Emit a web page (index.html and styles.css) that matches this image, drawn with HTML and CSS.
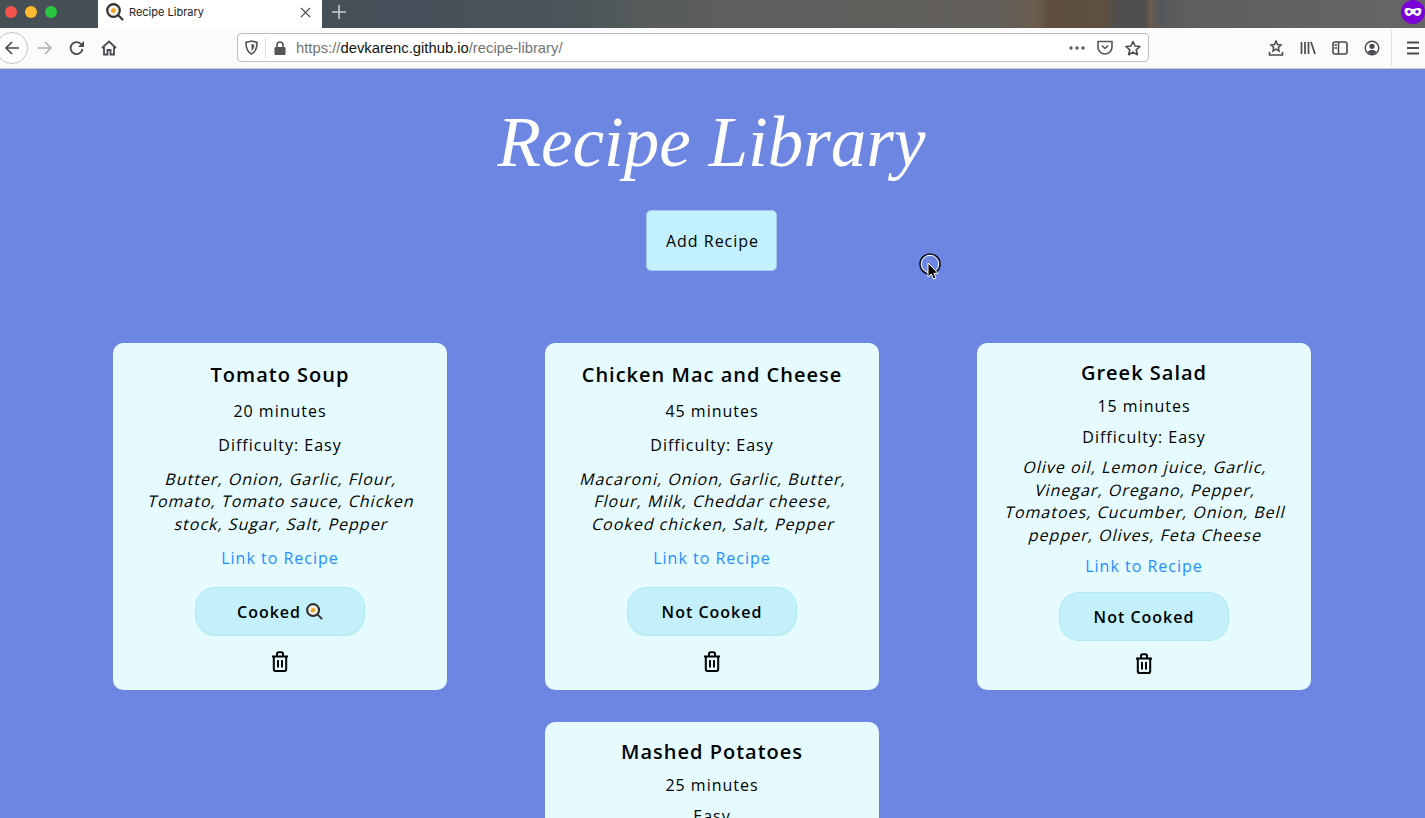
FILE: index.html
```html
<!DOCTYPE html>
<html lang="en">
<head>
<meta charset="utf-8">
<title>Recipe Library</title>
<link rel="stylesheet" href="styles.css">
</head>
<body>
<svg class="defs" width="0" height="0" aria-hidden="true">
  <defs>
    <symbol id="pan" viewBox="0 0 18 18">
      <path d="M11.5 11.5L16.5 16.5" stroke="#3a3a3a" stroke-width="2.2" stroke-linecap="round" fill="none"/>
      <circle cx="7.5" cy="7.5" r="6.3" fill="#f4efe6" stroke="#30302e" stroke-width="2.2"/>
      <circle cx="7.3" cy="7.6" r="2.3" fill="#f7a21b"/>
    </symbol>
    <symbol id="trash" viewBox="0 0 18 21">
      <path d="M1 5.5H17M6 5V2.8C6 1.9 6.6 1.2 7.5 1.2H10.5C11.4 1.2 12 1.9 12 2.8V5M2.8 5.5V18.2C2.8 19.2 3.6 20 4.6 20H13.4C14.4 20 15.2 19.2 15.2 18.2V5.5M7 9V16.5M11 9V16.5" fill="none" stroke="#000" stroke-width="2"/>
    </symbol>
  </defs>
</svg>

<div class="tabbar">
  <div class="lights">
    <span class="light light-red"></span>
    <span class="light light-yellow"></span>
    <span class="light light-green"></span>
  </div>
  <div class="tab">
    <svg class="tab-icon"><use href="#pan"/></svg>
    <span class="tab-title">Recipe Library</span>
    <svg class="tab-close" viewBox="0 0 12 12"><path d="M1 1L11 11M11 1L1 11" stroke="#444" stroke-width="1.4" fill="none"/></svg>
  </div>
  <svg class="new-tab" viewBox="0 0 14 14"><path d="M7 0V14M0 7H14" stroke="#c9cdcd" stroke-width="1.6" fill="none"/></svg>
  <svg class="mask" viewBox="0 0 24 24"><circle cx="12" cy="12" r="12" fill="#7b00d8"/><path d="M3.5 10C3.5 8.5 5 8 7 8C9 8 10.5 9 12 9C13.5 9 15 8 17 8C19 8 20.5 8.5 20.5 10C20.5 13 19 16 16.5 16C14 16 13.5 14 12 14C10.5 14 10 16 7.5 16C5 16 3.5 13 3.5 10Z" fill="#fff"/><circle cx="8" cy="11.8" r="1.7" fill="#7b00d8"/><circle cx="16" cy="11.8" r="1.7" fill="#7b00d8"/></svg>
</div>

<div class="toolbar">
  <span class="tool tool-back"><svg class="ico" viewBox="0 0 16 16"><path d="M15 8H2M8 2L2 8L8 14" fill="none" stroke="#4a4a4f" stroke-width="1.7"/></svg></span>
  <span class="tool tool-forward"><svg class="ico" viewBox="0 0 16 16"><path d="M1 8H14M8 2L14 8L8 14" fill="none" stroke="#b1b1b3" stroke-width="1.6"/></svg></span>
  <span class="tool"><svg class="ico" viewBox="0 0 16 16"><path d="M13.5 9A6 6 0 1 1 12 4L14 6" fill="none" stroke="#4a4a4f" stroke-width="1.8"/><path d="M15 1V7H9Z" fill="#4a4a4f"/></svg></span>
  <span class="tool"><svg class="ico" viewBox="0 0 16 16"><path d="M1 8L8 1.5L15 8M3 7V14.5H6.5V10H9.5V14.5H13V7" fill="none" stroke="#4a4a4f" stroke-width="1.8"/></svg></span>

  <div class="urlbar">
    <svg class="ico-small" viewBox="0 0 14 16"><path d="M7 1L13 2.5C13 9 11 13 7 15C3 13 1 9 1 2.5Z" fill="none" stroke="#55555a" stroke-width="1.7"/><path d="M7 4L10 5C10 8 9 10.5 7 12Z" fill="#55555a"/></svg>
    <span class="url-sep"></span>
    <svg class="ico-lock" viewBox="0 0 12 14"><path d="M3 6V4A3 3 0 0 1 9 4V6" fill="none" stroke="#55555a" stroke-width="1.6"/><rect x="0.5" y="6" width="11" height="8" rx="1.2" fill="#55555a"/></svg>
    <span class="url-text">https://<b class="url-host">devkarenc.github.io</b>/recipe-library/</span>
    <svg class="ico-dots" viewBox="0 0 16 4"><circle cx="2" cy="2" r="1.7" fill="#5a5a5f"/><circle cx="8" cy="2" r="1.7" fill="#5a5a5f"/><circle cx="14" cy="2" r="1.7" fill="#5a5a5f"/></svg>
    <svg class="ico-pocket" viewBox="0 0 16 15"><path d="M1 1.5H15V7A7 7 0 0 1 1 7Z" fill="none" stroke="#55555a" stroke-width="1.6" stroke-linejoin="round"/><path d="M4.8 5.5L8 8.5L11.2 5.5" fill="none" stroke="#55555a" stroke-width="1.6"/></svg>
    <svg class="ico-star" viewBox="0 0 16 16"><path d="M8 1.5L10 6L15 6.5L11.2 9.8L12.3 14.7L8 12.1L3.7 14.7L4.8 9.8L1 6.5L6 6Z" fill="none" stroke="#4a4a4f" stroke-width="1.6" stroke-linejoin="round"/></svg>
  </div>

  <div class="tools-right">
    <span class="tool"><svg class="ico" viewBox="0 0 16 16"><path d="M8 1L9.5 4.5L13 5L10.4 7.4L11 11L8 9.2L5 11L5.6 7.4L3 5L6.5 4.5Z" fill="none" stroke="#4a4a4f" stroke-width="1.5"/><path d="M1.5 12V15H14.5V12" fill="none" stroke="#4a4a4f" stroke-width="1.6"/></svg></span>
    <span class="tool"><svg class="ico" viewBox="0 0 16 16"><path d="M1.5 2V14M5 2V14M8.5 2V14M11 2L15 14" fill="none" stroke="#4a4a4f" stroke-width="1.7"/></svg></span>
    <span class="tool"><svg class="ico" viewBox="0 0 16 16"><rect x="1" y="2" width="14" height="12" rx="2" fill="none" stroke="#4a4a4f" stroke-width="1.6"/><path d="M6.5 2V14M2.5 5H5M2.5 8H5" fill="none" stroke="#4a4a4f" stroke-width="1.5"/></svg></span>
    <span class="tool"><svg class="ico" viewBox="0 0 16 16"><circle cx="8" cy="8" r="6.8" fill="none" stroke="#4a4a4f" stroke-width="1.4"/><circle cx="8" cy="6.3" r="2.6" fill="#4a4a4f"/><path d="M3.5 12.5C4.5 10.5 6 10 8 10C10 10 11.5 10.5 12.5 12.5L8 14.5Z" fill="#4a4a4f"/></svg></span>
  </div>
  <span class="tool-sep"></span>
  <span class="tool"><svg class="ico" viewBox="0 0 16 16"><path d="M2 2.5H14M2 8H14M2 13.5H14" fill="none" stroke="#4a4a4f" stroke-width="1.8"/></svg></span>
</div>

<main class="page">
  <h1 class="title">Recipe Library</h1>
  <button class="add-btn" type="button">Add Recipe</button>

  <section class="cards">
    <article class="card">
      <h2 class="card-title">Tomato Soup</h2>
      <p class="card-text">20 minutes</p>
      <p class="card-text">Difficulty: Easy</p>
      <p class="card-text">
        <span class="slant">Butter, Onion, Garlic, Flour,</span>
        <span class="slant">Tomato, Tomato sauce, Chicken</span>
        <span class="slant">stock, Sugar, Salt, Pepper</span>
      </p>
      <a class="card-link" href="#">Link to Recipe</a>
      <button class="cook-btn" type="button">Cooked <svg class="cook-icon"><use href="#pan"/></svg></button>
      <svg class="trash"><use href="#trash"/></svg>
    </article>
    <article class="card">
      <h2 class="card-title">Chicken Mac and Cheese</h2>
      <p class="card-text">45 minutes</p>
      <p class="card-text">Difficulty: Easy</p>
      <p class="card-text">
        <span class="slant">Macaroni, Onion, Garlic, Butter,</span>
        <span class="slant">Flour, Milk, Cheddar cheese,</span>
        <span class="slant">Cooked chicken, Salt, Pepper</span>
      </p>
      <a class="card-link" href="#">Link to Recipe</a>
      <button class="cook-btn" type="button">Not Cooked</button>
      <svg class="trash"><use href="#trash"/></svg>
    </article>
    <article class="card">
      <h2 class="card-title">Greek Salad</h2>
      <p class="card-text">15 minutes</p>
      <p class="card-text">Difficulty: Easy</p>
      <p class="card-text">
        <span class="slant">Olive oil, Lemon juice, Garlic,</span>
        <span class="slant">Vinegar, Oregano, Pepper,</span>
        <span class="slant">Tomatoes, Cucumber, Onion, Bell</span>
        <span class="slant">pepper, Olives, Feta Cheese</span>
      </p>
      <a class="card-link" href="#">Link to Recipe</a>
      <button class="cook-btn" type="button">Not Cooked</button>
      <svg class="trash"><use href="#trash"/></svg>
    </article>
    <article class="card">
      <h2 class="card-title">Mashed Potatoes</h2>
      <p class="card-text">25 minutes</p>
      <p class="card-text">Easy</p>
      <p class="card-text">
        <span class="slant">Potatoes, Butter, Milk, Garlic,</span>
        <span class="slant">Cream, Salt, Pepper, Chives,</span>
        <span class="slant">Sour cream, Parsley, Nutmeg,</span>
        <span class="slant">Olive oil, Parmesan cheese</span>
      </p>
      <a class="card-link" href="#">Link to Recipe</a>
      <button class="cook-btn" type="button">Not Cooked</button>
      <svg class="trash"><use href="#trash"/></svg>
    </article>
  </section>

  <div class="cursor">
    <svg class="cursor-svg" viewBox="0 0 26 32"><circle cx="11" cy="11" r="10" fill="none" stroke="#10131f" stroke-width="1.6"/><circle cx="11" cy="11" r="8.7" fill="none" stroke="#fff" stroke-width="1"/><path d="M9 10V24L12.3 21L14.5 26L17 25L14.8 20.3H19Z" fill="#000" stroke="#fff" stroke-width="1"/></svg>
  </div>
</main>
</body>
</html>
```
FILE: styles.css
```css
* { box-sizing: border-box; }
html, body { margin: 0; height: 818px; overflow: hidden; }
body {
  display: flex;
  flex-direction: column;
  background: #6c86e2;
  font-family: "Open Sans", "Liberation Sans", sans-serif;
  color: #000;
}
.defs { position: absolute; }

.tabbar {
  flex: 0 0 28px;
  display: flex;
  align-items: center;
  padding-bottom: 4px;
  background: linear-gradient(90deg, #454f54 0, #46505a 420px, #4a5558 580px, #565b5b 640px, #5e5e5e 730px, #625f5a 1000px, #665b50 1015px, #6a5d50 1035px, #5c4d3f 1050px, #5d5041 1105px, #4f4f4f 1118px, #4f4f4f 1145px, #6a5a4c 1150px, #55585a 1160px, #5e5e5e 1185px, #666 1425px);
}
.lights { display: flex; gap: 8px; padding-left: 5px; width: 98px; }
.light { width: 12px; height: 12px; border-radius: 50%; }
.light-red { background: #f5544d; }
.light-yellow { background: #fbbb2d; }
.light-green { background: #27c83f; }
.tab {
  width: 224px;
  height: 28px;
  margin-bottom: -4px;
  background: #fff;
  display: flex;
  align-items: center;
  padding: 0 11px 4px 8px;
}
.tab-icon { width: 18px; height: 18px; flex: none; }
.tab-title {
  margin-left: 5px;
  flex: 1;
  font: 11px "Inter", "Liberation Sans", sans-serif;
  color: #222;
}
.tab-close { width: 11px; height: 11px; }
.new-tab { width: 14px; height: 14px; margin-left: 10px; }
.mask { width: 24px; height: 24px; margin-left: auto; }

.toolbar {
  flex: 0 0 41px;
  display: flex;
  align-items: center;
  background: #fbfbfb;
  border-bottom: 1px solid #ccc;
  margin-left: -4px;
  padding-bottom: 1px;
  overflow: hidden;
}
.tool {
  flex: 0 0 32px;
  height: 32px;
  display: flex;
  align-items: center;
  justify-content: center;
  border-radius: 50%;
}
.tool-back { border: 1px solid #c4c4c4; background: #fff; }
.tool-forward { margin-left: 1px; }
.ico { width: 16px; height: 16px; }
.urlbar {
  flex: 0 0 912px;
  height: 29px;
  margin-left: 112px;
  display: flex;
  align-items: center;
  background: #fff;
  border: 1px solid #bdbdbd;
  border-radius: 4px;
  padding: 0 7px 0 7px;
}
.ico-small { width: 13px; height: 15px; flex: none; }
.url-sep { width: 1px; height: 20px; background: #ddd; margin: 0 8px 0 7px; }
.ico-lock { width: 12px; height: 14px; flex: none; }
.url-text {
  margin-left: 10px;
  flex: 1;
  font: 14.8px "Liberation Sans", sans-serif;
  color: #737373;
}
.url-host { font-weight: 400; color: #111; }
.ico-dots { width: 16px; height: 4px; margin-right: 12px; }
.ico-pocket { width: 16px; height: 15px; margin-right: 12px; }
.ico-star { width: 16px; height: 16px; }
.tools-right { display: flex; margin-left: 111px; flex: none; }
.tool-sep { flex: 0 0 1px; height: 36px; background: #e2e2e2; margin: 0 5px 0 3px; }

.page {
  position: relative;
  flex: 1;
  display: flex;
  flex-direction: column;
  align-items: center;
  min-height: 0;
  padding-right: 2px;
  overflow: hidden;
}
.title {
  flex: none;
  margin: 29px 0 0;
  height: 112px;
  font: italic 400 71px/88px "Liberation Serif", serif;
  color: #fff;
}
.add-btn {
  flex: none;
  width: 131px;
  height: 61px;
  padding: 0 0 0 2px;
  background: #c3f0fd;
  border: 1px solid #a9c8f0;
  border-radius: 5px;
  font: 400 16px "Open Sans", sans-serif;
  letter-spacing: 1px;
  color: #000;
}
.cards {
  flex: none;
  margin: 72px 0 0 1px;
  display: flex;
  flex-wrap: wrap;
  justify-content: center;
  column-gap: 98px;
  row-gap: 32px;
  width: 1198px;
}
.card {
  width: 334px;
  min-height: 347px;
  display: flex;
  flex-direction: column;
  align-items: center;
  justify-content: space-around;
  padding: 11px 20px 12px;
  background: #e6fbff;
  border-radius: 10px;
  text-align: center;
  letter-spacing: 1px;
}
.card-title {
  margin: 0;
  font-size: 20px;
  font-weight: 600;
  line-height: 29px;
}
.card-text {
  margin: 0;
  font-size: 16px;
  line-height: 22.5px;
}
.slant {
  display: block;
  transform: translateX(1.5px) skewX(-14deg);
}
.card-link {
  font-size: 16px;
  line-height: 22.5px;
  color: #1e8fff;
  text-decoration: none;
}
.cook-btn {
  width: 170px;
  height: 49px;
  margin-top: 7px;
  display: flex;
  align-items: center;
  justify-content: center;
  gap: 5px;
  background: #c3f0fb;
  border: 1px solid #aeeaf3;
  border-radius: 20px;
  font: 600 16px "Open Sans", sans-serif;
  letter-spacing: 1px;
  color: #000;
}
.cook-icon { width: 17px; height: 17px; }
.trash { width: 18px; height: 21px; margin-top: 3.5px; }
.cursor { position: absolute; left: 919px; top: 184px; }
.cursor-svg { display: block; width: 26px; height: 32px; }
```
